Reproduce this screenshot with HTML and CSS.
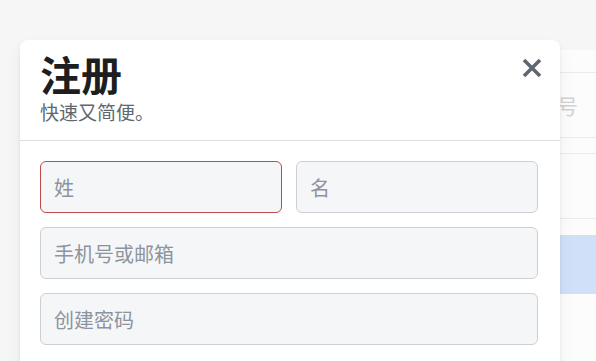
FILE: index.html
```html
<!DOCTYPE html>
<html lang="zh-CN">
<head>
<meta charset="utf-8">
<title>注册</title>
<link rel="stylesheet" href="styles.css">
</head>
<body>
<div class="page">
  <div class="tagline"><span>保持联系，</span></div>
  <div class="login-card">
    <div class="login-input"><span>手机号</span></div>
    <div class="login-input"></div>
    <div class="login-button"></div>
  </div>
</div>
<div class="modal">
  <div class="modal-header">
    <div class="modal-title">注册</div>
    <div class="modal-subtitle">快速又简便。</div>
    <button class="close" aria-label="关闭">
      <svg width="20" height="20" viewBox="0 0 20 20"><path d="M2 2 L18 18 M18 2 L2 18" stroke="#606770" stroke-width="3.6" stroke-linecap="butt" fill="none"/></svg>
    </button>
  </div>
  <form class="form">
    <div class="row two">
      <input class="field error" type="text" placeholder="姓">
      <input class="field" type="text" placeholder="名">
    </div>
    <div class="row">
      <input class="field" type="text" placeholder="手机号或邮箱">
    </div>
    <div class="row">
      <input class="field" type="password" placeholder="创建密码">
    </div>
  </form>
</div>
</body>
</html>
```
FILE: styles.css
```css
html, body {
  margin: 0;
  padding: 0;
}
body {
  width: 596px;
  height: 361px;
  overflow: hidden;
  position: relative;
  background: #f6f6f6;
  font-family: "Noto Sans CJK SC", "Noto Sans", sans-serif;
}
.page {
  display: flex;
  justify-content: space-between;
  height: 100%;
}
.tagline {
  width: 14px;
  height: 40px;
  margin-top: 230px;
  overflow: hidden;
  display: flex;
  justify-content: flex-end;
  font-size: 24px;
  line-height: 40px;
  color: #d9d9d9;
  white-space: nowrap;
}
.login-card {
  width: 60px;
  margin-top: 50px;
  padding-top: 22px;
  background: #fcfcfc;
  box-sizing: border-box;
  display: flex;
  flex-direction: column;
}
.login-input {
  height: 66px;
  box-sizing: border-box;
  border: 1px solid #ebebeb;
  border-right: none;
  display: flex;
  align-items: center;
  justify-content: flex-end;
  padding-right: 18px;
  font-size: 21px;
  color: #d2d2d2;
  white-space: nowrap;
  overflow: hidden;
}
.login-input + .login-input {
  margin-top: 15px;
}
.login-button {
  margin-top: 16px;
  height: 59px;
  background: #cfe0f8;
}
.modal {
  position: absolute;
  left: 20px;
  top: 40px;
  width: 540px;
  height: 340px;
  background: #ffffff;
  border-radius: 8px;
  box-shadow: 0 2px 4px rgba(0, 0, 0, 0.06), 0 8px 16px rgba(0, 0, 0, 0.06);
}
.modal-header {
  position: relative;
  padding: 8px 22px 14px 20px;
  border-bottom: 1px solid #dadde1;
}
.modal-title {
  font-size: 41px;
  line-height: 50px;
  font-weight: 700;
  color: #1c1e21;
}
.modal-subtitle {
  font-size: 19px;
  line-height: 28px;
  color: #606770;
}
.close {
  position: absolute;
  top: 18px;
  right: 18px;
  width: 20px;
  height: 20px;
  padding: 0;
  border: none;
  background: transparent;
  display: block;
}
.close svg {
  display: block;
}
.form {
  margin: 0;
  padding: 20px 22px 0 20px;
  display: flex;
  flex-direction: column;
  gap: 14px;
}
.row {
  display: flex;
}
.row.two {
  gap: 14px;
}
.field {
  flex: 1;
  min-width: 0;
  height: 52px;
  box-sizing: border-box;
  margin: 0;
  padding: 0 13px;
  border: 1px solid #ccd0d5;
  border-radius: 6px;
  background: #f5f6f7;
  font-family: "Noto Sans CJK SC", "Noto Sans", sans-serif;
  font-size: 20px;
  color: #1c1e21;
  outline: none;
}
.field::placeholder {
  color: #8d949e;
}
.field.error {
  border-color: #be4b49;
}
```
